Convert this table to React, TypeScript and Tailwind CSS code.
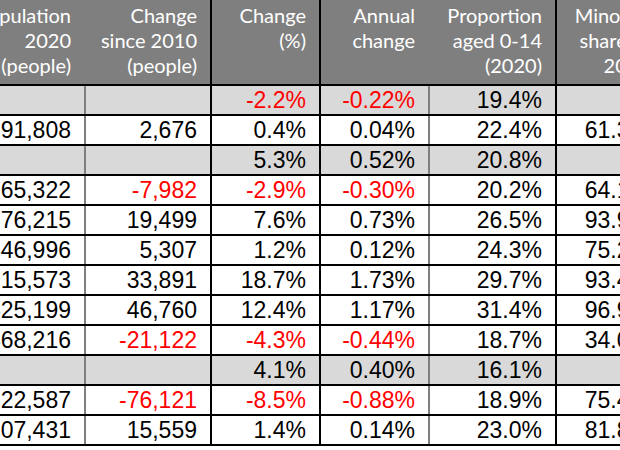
import React from "react";

type Cell = { v: string; red?: boolean };
type Row = { gray?: boolean; cells: Cell[] };

const COLS = [
  { w: "w-[126px]", b: "border-r-2 border-[#7f7f7f]" },
  { w: "w-[126px]", b: "border-r-2 border-black" },
  { w: "w-[109px]", b: "border-r-2 border-black" },
  { w: "w-[109px]", b: "border-r-2 border-[#7f7f7f]" },
  { w: "w-[127px]", b: "border-r-2 border-black" },
  { w: "w-[108px]", b: "border-r-2 border-black" },
];

const HEADERS = [
  ["Population", "2020", "(people)"],
  ["Change", "since 2010", "(people)"],
  ["Change", "(%)"],
  ["Annual", "change"],
  ["Proportion", "aged 0-14", "(2020)"],
  ["Minority", "share of", "2020"],
];

const r = (v: string): Cell => ({ v, red: true });
const n = (v: string): Cell => ({ v });

const ROWS: Row[] = [
  { gray: true, cells: [n(""), n(""), r("-2.2%"), r("-0.22%"), n("19.4%"), n("")] },
  { cells: [n("291,808"), n("2,676"), n("0.4%"), n("0.04%"), n("22.4%"), n("61.3%")] },
  { gray: true, cells: [n(""), n(""), n("5.3%"), n("0.52%"), n("20.8%"), n("")] },
  { cells: [n("265,322"), r("-7,982"), r("-2.9%"), r("-0.30%"), n("20.2%"), n("64.1%")] },
  { cells: [n("276,215"), n("19,499"), n("7.6%"), n("0.73%"), n("26.5%"), n("93.9%")] },
  { cells: [n("446,996"), n("5,307"), n("1.2%"), n("0.12%"), n("24.3%"), n("75.2%")] },
  { cells: [n("215,573"), n("33,891"), n("18.7%"), n("1.73%"), n("29.7%"), n("93.4%")] },
  { cells: [n("425,199"), n("46,760"), n("12.4%"), n("1.17%"), n("31.4%"), n("96.9%")] },
  { cells: [n("468,216"), r("-21,122"), r("-4.3%"), r("-0.44%"), n("18.7%"), n("34.0%")] },
  { gray: true, cells: [n(""), n(""), n("4.1%"), n("0.40%"), n("16.1%"), n("")] },
  { cells: [n("822,587"), r("-76,121"), r("-8.5%"), r("-0.88%"), n("18.9%"), n("75.4%")] },
  { cells: [n("1,107,431"), n("15,559"), n("1.4%"), n("0.14%"), n("23.0%"), n("81.8%")] },
];

export default function App() {
  return (
    <div className="w-[620px] h-[450px] overflow-hidden bg-white">
      <div className="-ml-[40px] w-[705px]">
        <div className="flex h-[86px] bg-[#7f7f7f] border-b-2 border-black">
          {HEADERS.map((lines, i) => (
            <div
              key={i}
              className={`${COLS[i].w} ${COLS[i].b} shrink-0 flex flex-col justify-start items-end pt-[3px] pr-[13px] text-white text-[20px] leading-[25px] font-['Lato',sans-serif]`}
            >
              {lines.map((l) => (
                <span key={l} className="whitespace-nowrap">{l}</span>
              ))}
            </div>
          ))}
        </div>
        {ROWS.map((row, ri) => (
          <div
            key={ri}
            className={`flex h-[30px] border-b-2 border-black ${row.gray ? "bg-[#d9d9d9]" : "bg-white"}`}
          >
            {row.cells.map((c, ci) => (
              <div
                key={ci}
                className={`${COLS[ci].w} ${COLS[ci].b} shrink-0 flex items-center justify-end pr-[13px] text-[23px] leading-none whitespace-nowrap font-['Liberation_Sans',Arial,sans-serif] ${c.red ? "text-[#ff0000]" : "text-black"}`}
              >
                {c.v}
              </div>
            ))}
          </div>
        ))}
      </div>
    </div>
  );
}
